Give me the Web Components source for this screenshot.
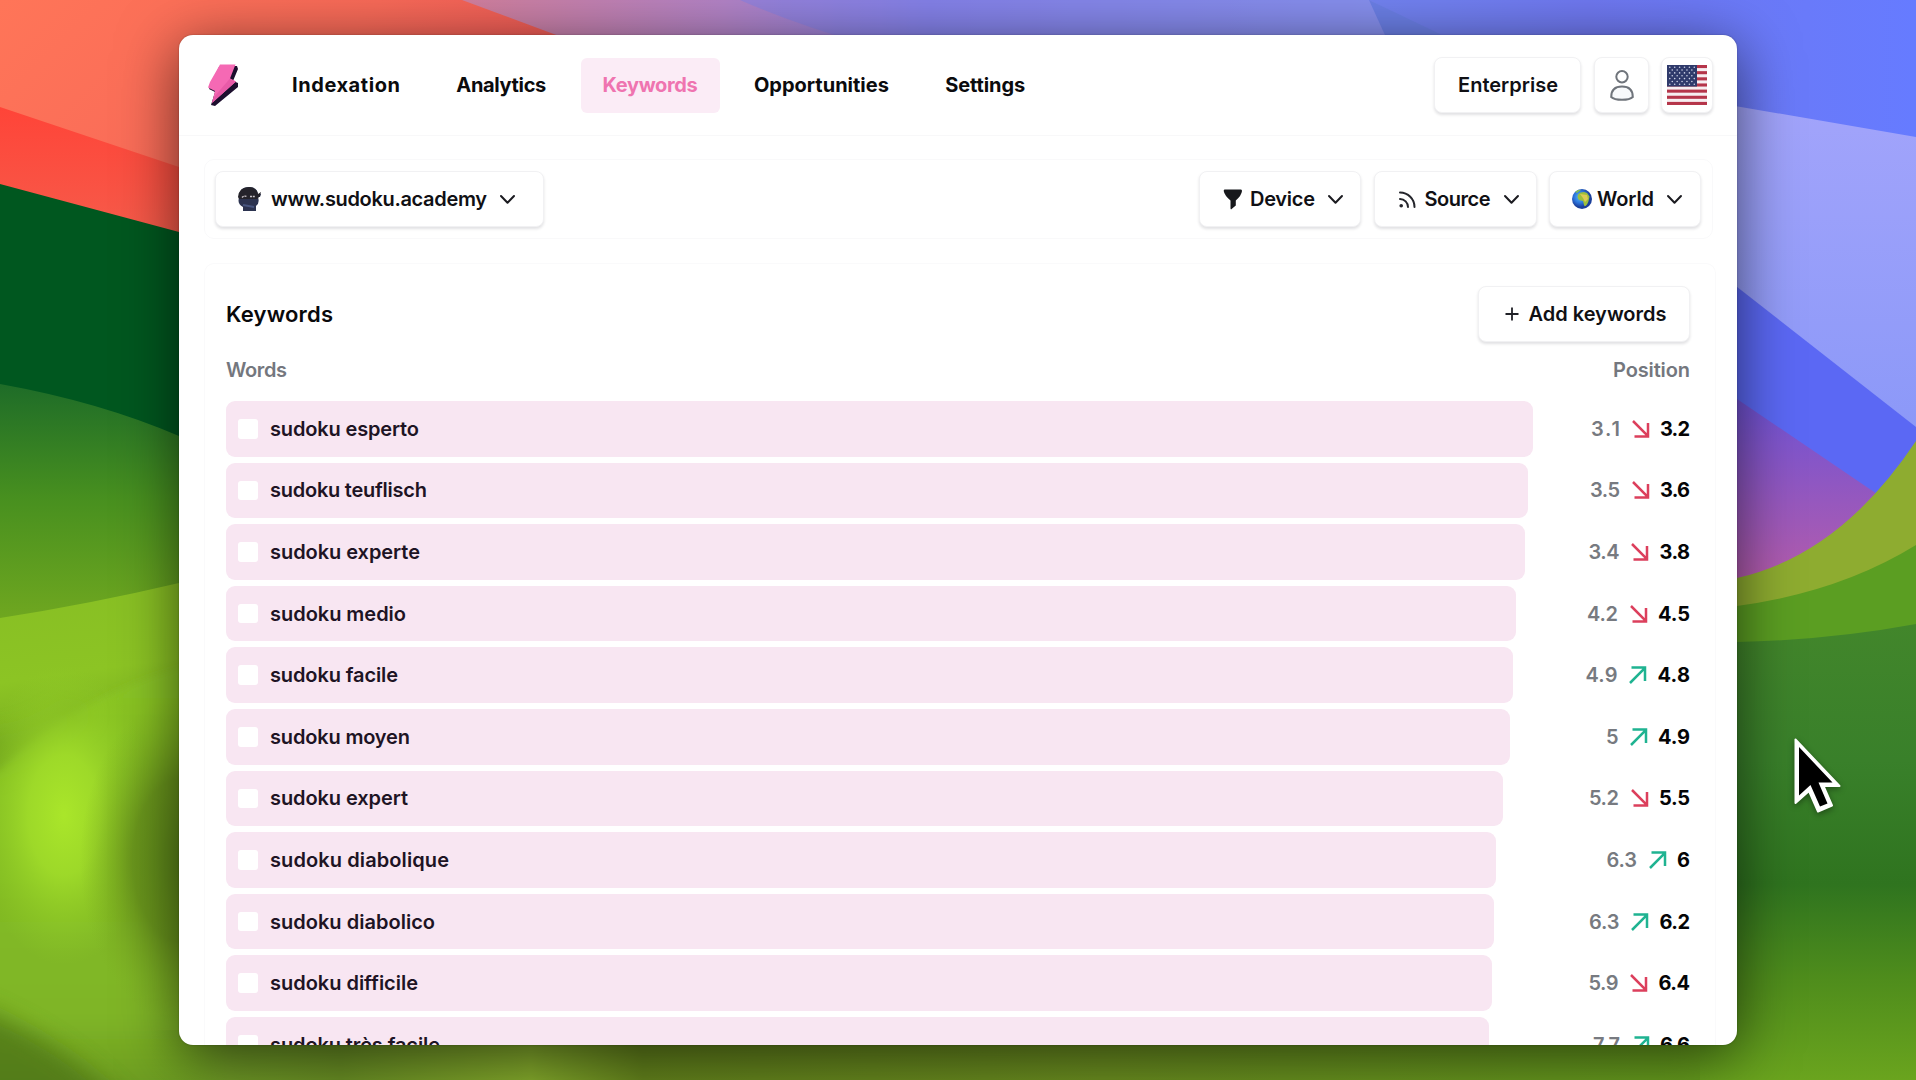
<!DOCTYPE html>
<html lang="en">
<head>
<meta charset="utf-8">
<title>Keywords</title>
<style>
html,body{margin:0;height:100%;overflow:hidden}
body{font-family:Inter,"Open Sans",sans-serif;font-weight:600;font-size:20px;color:#101014}
</style>
</head>
<body>
<keywords-app></keywords-app>
<script>
const def = (name, html, setup) => {
  const tpl = document.createElement('template');
  tpl.innerHTML = html;
  customElements.define(name, class extends HTMLElement {
    connectedCallback() {
      if (this.shadowRoot) return;
      this.attachShadow({mode: 'open'}).append(tpl.content.cloneNode(true));
      if (setup) setup(this, this.shadowRoot);
    }
  });
};

/* Text tracked out to a given advance width */
def('track-text', `<style>
:host{display:inline-block;white-space:nowrap;line-height:28px;flex:none}
span{display:inline-block}
</style><span><slot></slot></span>`, (el, root) => {
  const s = root.querySelector('span');
  const w = +el.getAttribute('w');
  const n = el.textContent.length;
  el.style.width = w + 'px';
  if (n > 1) s.style.letterSpacing = ((w - s.getBoundingClientRect().width) / (n - 1)) + 'px';
});

def('desk-wallpaper', `<style>:host{display:block;width:1916px;height:1080px}svg{display:block}</style>
<svg width="1916" height="1080" viewBox="0 0 1916 1080">
<defs>
<linearGradient id="or" x1="0" y1="0" x2="1" y2=".3"><stop offset="0" stop-color="#ff7558"/><stop offset=".35" stop-color="#f86a58"/><stop offset=".7" stop-color="#e95055"/><stop offset="1" stop-color="#e34c58"/></linearGradient>
<linearGradient id="rd" x1="0" y1="0" x2="0" y2="1"><stop offset="0" stop-color="#ff4438"/><stop offset="1" stop-color="#f4604e"/></linearGradient>
<linearGradient id="top" x1="0" y1="0" x2="1" y2="0"><stop offset="0" stop-color="#d27f9c"/><stop offset=".28" stop-color="#b283c6"/><stop offset=".5" stop-color="#8b82e6"/><stop offset="1" stop-color="#8f9df0"/></linearGradient>
<linearGradient id="bl" x1="0" y1="0" x2="1" y2="0"><stop offset="0" stop-color="#7283f0"/><stop offset=".4" stop-color="#6f78f0"/><stop offset="1" stop-color="#667bff"/></linearGradient>
<linearGradient id="lv" x1="0" y1="0" x2="0" y2="1"><stop offset="0" stop-color="#a2a4fb"/><stop offset="1" stop-color="#8b98f8"/></linearGradient>
<linearGradient id="pu" x1="0" y1="0" x2="0" y2="1"><stop offset="0" stop-color="#6a52d8"/><stop offset="1" stop-color="#b45cac"/></linearGradient>
<linearGradient id="g1" x1="0" y1="0" x2="0" y2="1"><stop offset="0" stop-color="#1e6c28"/><stop offset=".45" stop-color="#48901f"/><stop offset="1" stop-color="#76ab20"/></linearGradient>
<linearGradient id="g2" x1="0" y1="0" x2=".15" y2="1"><stop offset="0" stop-color="#86bd24"/><stop offset=".5" stop-color="#8cc424"/><stop offset="1" stop-color="#6b9c1c"/></linearGradient>
<linearGradient id="g3" x1="0" y1="0" x2="0" y2="1"><stop offset="0" stop-color="#8cc726"/><stop offset=".35" stop-color="#84bd22"/><stop offset=".75" stop-color="#7fb527"/><stop offset="1" stop-color="#5f8a1b"/></linearGradient>
<radialGradient id="glow"><stop offset="0" stop-color="#aae62a"/><stop offset=".4" stop-color="#a2de2a" stop-opacity=".85"/><stop offset="1" stop-color="#90cc28" stop-opacity="0"/></radialGradient>
<radialGradient id="dk"><stop offset="0" stop-color="#5c861a"/><stop offset=".5" stop-color="#658f1b" stop-opacity=".85"/><stop offset="1" stop-color="#7cae20" stop-opacity="0"/></radialGradient>
<linearGradient id="rg" x1="0" y1="0" x2="0" y2="1"><stop offset="0" stop-color="#42862b"/><stop offset=".3" stop-color="#39802a"/><stop offset=".57" stop-color="#2f741f"/><stop offset=".78" stop-color="#4f8d1c"/><stop offset="1" stop-color="#6aa41e"/></linearGradient>
<linearGradient id="bot" x1="0" y1="0" x2="1" y2="0"><stop offset="0" stop-color="#6b9c20" stop-opacity="0"/><stop offset=".05" stop-color="#6f9a26"/><stop offset=".12" stop-color="#6a9024"/><stop offset=".24" stop-color="#86ad2c"/><stop offset=".31" stop-color="#64841c"/><stop offset=".6" stop-color="#6c9020"/><stop offset="1" stop-color="#659e1d"/></linearGradient>
<filter id="b" x="-20%" y="-20%" width="140%" height="140%"><feGaussianBlur stdDeviation="12"/></filter>
<filter id="c" x="-20%" y="-20%" width="140%" height="140%"><feGaussianBlur stdDeviation="3"/></filter>
</defs>
<rect width="1916" height="1080" fill="#5c861c"/>
<rect width="1000" height="300" fill="url(#or)"/>
<path d="M462 0H1400V200H1000Z" fill="url(#top)"/>
<path d="M740 0Q830 40 1000 80H1400V0Z" fill="#7c80ec" opacity=".45"/>
<path d="M1369 0H1916V200H1760Z" fill="url(#bl)"/>
<path d="M1369 0L1440 34L1500 200H1460Z" fill="#6b7fe6"/>
<path d="M0 107L179 167L260 190V260L0 200Z" fill="url(#rd)"/>
<path d="M0 184L179 232L260 250V460L0 400Z" fill="#00571f"/>
<path d="M0 384Q100 402 179 436L260 460V640L0 640Z" fill="url(#g1)"/>
<path d="M0 618Q90 604 179 583L260 560V800H0Z" fill="url(#g2)"/>
<path d="M-60 770H0Q70 700 179 668L300 640V1140H-60Z" fill="url(#g3)" filter="url(#c)"/>
<path d="M-40 735Q20 745 70 705L90 712Q40 760 -40 780Z" fill="#6b9c1c" filter="url(#b)" opacity=".6"/>
<ellipse cx="64" cy="815" rx="90" ry="150" fill="url(#glow)"/>
<ellipse cx="185" cy="860" rx="105" ry="165" fill="url(#dk)"/>
<path d="M-40 1000Q70 1040 150 1130H-40Z" fill="#4b7216" filter="url(#b)" opacity=".75"/>
<rect x="150" y="1030" width="1588" height="50" fill="url(#bot)"/>
<path d="M1700 100L1916 137V440L1700 260Z" fill="url(#lv)"/>
<path d="M1700 258L1916 427V560H1700Z" fill="#5b68f4"/>
<path d="M1700 386L1737 399L1880 496L1800 580H1700Z" fill="url(#pu)"/>
<path d="M1700 590L1737 578Q1840 555 1916 441V640H1700Z" fill="#8eac30"/>
<path d="M1700 610L1737 606Q1840 592 1916 545V680H1700Z" fill="#5b9e22"/>
<path d="M1700 644L1737 642Q1830 640 1916 624V1080H1700Z" fill="url(#rg)"/>
</svg>`);

def('svg-icon', `<style>:host{display:block;flex:none}svg{display:block;overflow:visible}</style>`, (el, root) => {
  const I = {
    bolt: [32, 44, `<path d="M15 3L30 3L31 6L26 18L31 20L31 24L8 43L4 42L8 29L2 26L12 4Z" fill="#1d0f2e"/><path d="M13 1.500L28.500 1.500L23 15.500L29 18.500L5 40L8 28L1 24.500L3 19Z" fill="#f569b4"/><path d="M23 15.500L29 18.500L5 40L7 34Z" fill="#e85ba8"/>`],
    ninja: [24, 24, `<path d="M2 11Q2 0 12 0Q20 0 21 7L24 7L23 10L21 10Q23 16 19 19V24H6V20Q0 17 2 11Z" fill="#2c3350"/><path d="M1 10Q2 0 12 0Q19 0 21 7L24 5L23 9L20 12H2Z" fill="#24232b"/><path d="M5 10.500Q7 8.500 10 9.500M13 9.500L18 9.500" stroke="#c9c3c8" stroke-width="1.400" fill="none" stroke-dasharray="2 .8"/><path d="M6 18L17 20" stroke="#48557f" stroke-width="2"/>`],
    chev: [15, 9, `<path d="M1 1L7.500 7.800L14 1" fill="none" stroke="#1b1b20" stroke-width="2" stroke-linecap="round" stroke-linejoin="round"/>`],
    filter: [20, 21, `<path d="M1.500 0.500H18Q19 .5 19 2Q18.500 6.500 12.800 11.500V16.500L8 20.500L7.500 19.500V11.500Q1.500 6.500 .7 2Q.7 .5 1.500 .5Z" fill="#17181c"/>`],
    rss: [17, 17, `<g fill="none" stroke="#25262c" stroke-width="2" stroke-linecap="round"><path d="M1 1.500A14.500 14.500 0 0 1 15.500 16"/><path d="M1 8A8 8 0 0 1 9 16"/></g><circle cx="2.200" cy="14.800" r="1.800" fill="#25262c"/>`],
    globe: [20, 20, `<defs><radialGradient id="g" cx=".4" cy=".4"><stop offset="0" stop-color="#58c0f4"/><stop offset=".6" stop-color="#2c74dc"/><stop offset="1" stop-color="#1b3f9a"/></radialGradient></defs><circle cx="10" cy="10" r="10" fill="url(#g)"/><path d="M6.500 5Q8 3 12 3L15 4L17.500 7.500L17 10Q16.500 13 15 15.500Q12.500 18.500 12 16L11 12L7 11Q4.500 8 6.500 5Z" fill="#9dbf3c"/><path d="M8 5L15 6L16 10L13 13L11 9Z" fill="#dccb55"/><path d="M3 3Q6 0 9 1L5 4Z" fill="#7fba58"/>`],
    plus: [14, 14, `<path d="M7 0.500V13.500M.5 7H13.500" stroke="#202127" stroke-width="1.800"/>`],
    user: [24, 31, `<g fill="#fff" stroke="#6f747b" stroke-width="2"><circle cx="12" cy="6.800" r="5.700"/><path d="M1.200 27Q1.200 16.500 12 16.500T22.800 27Q20 29.800 12 29.800T1.200 27Z" fill="#f7f9fb"/></g>`],
    down: [18, 18, `<path d="M1 1L16 16.200M16 3V16.500H2.500" fill="none" stroke="#dc3f5c" stroke-width="2.500"/>`],
    up: [18, 18, `<path d="M1 17L16 1.800M2.500 1.500H16V15" fill="none" stroke="#1fb391" stroke-width="2.500"/>`],
    pointer: [50, 80, `<path d="M2.500 3.500V67L16 55L25 75.500L39 69.500L30.500 50H46.500Z" fill="#fff" stroke="#fff" stroke-width="2" stroke-linejoin="round"/><path d="M6 11V59.500L17.500 49L27 70.500L34.500 67.500L25.500 46.500H39.500Z" fill="#000"/>`]
  };
  let k = el.getAttribute('name'), d = I[k];
  if (k === 'flag') {
    let s = '<rect width="40" height="40" rx="2" fill="#f6eef1"/>';
    for (let i = 0; i < 7; i++) s += `<rect y="${i * 6.15}" width="40" height="3.08" fill="#b5354a"/>`;
    s += '<rect width="30" height="21.500" fill="#2f3a6b"/>';
    for (let r = 0; r < 7; r++) for (let c = 0; c < (r % 2 ? 5 : 6); c++)
      s += `<circle cx="${2.8 + c * 4.9 + (r % 2 ? 2.45 : 0)}" cy="${2.2 + r * 2.85}" r=".8" fill="#cdd2e6"/>`;
    d = [40, 40, s];
  }
  root.innerHTML += `<svg width="${d[0]}" height="${d[1]}" viewBox="0 0 ${d[0]} ${d[1]}">${d[2]}</svg>`;
});

def('nav-item', `<style>
:host{display:flex;align-items:center;height:55px;padding:0 22px;border-radius:6px;font-weight:700;color:#0b0b0d}
:host([active]){background:#fbecf6;color:#ef74b0}
</style><slot></slot>`);

def('soft-button', `<style>
:host{display:flex;align-items:center;box-sizing:border-box;height:56px;border-radius:8px;background:#fff;border:1px solid #f1f1f3;box-shadow:0 2px 3px rgba(20,20,40,.13);flex:none}
</style><slot></slot>`, el => {
  el.style.width = el.getAttribute('w') + 'px';
  el.style.paddingLeft = (el.getAttribute('pad') || 0) - 1 + 'px';
});

def('app-header', `<style>
:host{display:flex;align-items:center;height:101px;box-sizing:border-box;border-bottom:1px solid #f8f8f9;padding:0 24px 0 28px}
nav{display:flex;gap:12.300px;margin-left:31px;flex:1}
.r{display:flex;align-items:center;gap:12.500px}
</style>
<svg-icon name="bolt"></svg-icon>
<nav>
<nav-item><track-text w="108">Indexation</track-text></nav-item>
<nav-item><track-text w="90">Analytics</track-text></nav-item>
<nav-item active><track-text w="95">Keywords</track-text></nav-item>
<nav-item><track-text w="135">Opportunities</track-text></nav-item>
<nav-item><track-text w="80">Settings</track-text></nav-item>
</nav>
<div class="r">
<soft-button w="147" pad="24"><track-text w="100">Enterprise</track-text></soft-button>
<soft-button w="55" pad="16"><svg-icon name="user"></svg-icon></soft-button>
<soft-button w="52" pad="6"><svg-icon name="flag"></svg-icon></soft-button>
</div>`);

def('filter-bar', `<style>
:host{display:flex;justify-content:space-between;align-items:center;height:80px;box-sizing:border-box;border:1px solid #f9f9fa;border-radius:10px;padding:0 11px 0 10px;margin:23px 24px 0 25px}
div{display:flex;gap:12.500px}
track-text{margin-left:9px}
.c{margin-left:13px}
</style>
<soft-button w="329" pad="22"><svg-icon name="ninja"></svg-icon><track-text w="216" style="margin-left:10px">www.sudoku.academy</track-text><svg-icon class="c" name="chev"></svg-icon></soft-button>
<div>
<soft-button w="162" pad="24"><svg-icon name="filter"></svg-icon><track-text w="65" style="margin-left:7px">Device</track-text><svg-icon class="c" name="chev"></svg-icon></soft-button>
<soft-button w="163" pad="25"><svg-icon name="rss"></svg-icon><track-text w="66">Source</track-text><svg-icon class="c" name="chev"></svg-icon></soft-button>
<soft-button w="152" pad="23"><svg-icon name="globe"></svg-icon><track-text w="57" style="margin-left:5px">World</track-text><svg-icon class="c" name="chev"></svg-icon></soft-button>
</div>`);

def('keyword-row', `<style>
:host{display:flex;align-items:center;justify-content:space-between;height:55.600px;flex:none}
.bar{display:flex;align-items:center;box-sizing:border-box;height:100%;border-radius:9px;background:#f8e6f2;padding-left:12px;color:#1e1424;font-weight:600}
.box{width:19.500px;height:19.500px;border-radius:3px;background:#fff;margin-right:12.500px}
.pos{display:flex;align-items:center}
.old{color:#777a80}
.new{color:#050506;font-weight:700}
svg-icon{margin:0 10.500px 0 11.500px}
</style>
<div class="bar"><div class="box"></div></div><div class="pos"></div>`, (el, root) => {
  const [word, w, end, a, aw, dir, b, bw] = el.data;
  const bar = root.querySelector('.bar');
  bar.style.width = end - 226 + 'px';
  bar.insertAdjacentHTML('beforeend', `<track-text w="${w}">${word}</track-text>`);
  root.querySelector('.pos').innerHTML =
    `<track-text class="old" w="${aw}">${a}</track-text><svg-icon name="${dir}"></svg-icon><track-text class="new" w="${bw}">${b}</track-text>`;
});

def('keyword-panel', `<style>
:host{display:block;border:1px solid #fafafb;border-bottom:0;border-radius:10px;margin:24px 21px 0 25px;padding:22px 25px 0 21px}
.h{display:flex;align-items:center;justify-content:space-between;height:56px}
.h .t{font-size:22px;color:#09090b}
.h soft-button{margin-right:.500px}
.s{display:flex;align-items:center;justify-content:space-between;height:28px;margin:13.500px 0 17.500px;color:#74777e}
.rows{display:flex;flex-direction:column;gap:6px}
</style>
<div class="h"><track-text class="t" w="107">Keywords</track-text>
<soft-button w="212" pad="27"><svg-icon name="plus"></svg-icon><track-text w="138" style="margin-left:10px">Add keywords</track-text></soft-button></div>
<div class="s"><track-text w="61">Words</track-text><track-text w="77">Position</track-text></div>
<div class="rows"></div>`, (el, root) => {
  const rows = root.querySelector('.rows');
  for (const d of [
    ['sudoku esperto', 149, 1532.7, '3.1', 29, 'down', '3.2', 30],
    ['sudoku teuflisch', 157, 1527.5, '3.5', 30, 'down', '3.6', 30],
    ['sudoku experte', 150, 1525, '3.4', 31, 'down', '3.8', 30.5],
    ['sudoku medio', 136, 1515.8, '4.2', 31, 'down', '4.5', 32],
    ['sudoku facile', 128, 1513, '4.9', 32, 'up', '4.8', 32.5],
    ['sudoku moyen', 140, 1509.5, '5', 12, 'up', '4.9', 32],
    ['sudoku expert', 138, 1502.5, '5.2', 30, 'down', '5.5', 31],
    ['sudoku diabolique', 179, 1495.6, '6.3', 30.5, 'up', '6', 13],
    ['sudoku diabolico', 165, 1493.5, '6.3', 30.5, 'up', '6.2', 30.5],
    ['sudoku difficile', 148, 1491.5, '5.9', 30, 'down', '6.4', 31.5],
    ['sudoku très facile', 170, 1488.5, '7.7', 27, 'up', '6.6', 30]
  ]) {
    const r = document.createElement('keyword-row');
    r.data = d;
    rows.append(r);
  }
});

def('app-window', `<style>
:host{display:block;width:1558px;height:1010px;border-radius:14px;background:#fff;overflow:hidden;box-shadow:0 12px 60px rgba(0,0,0,.6),0 0 2px rgba(0,0,0,.3)}
</style><app-header></app-header><filter-bar></filter-bar><keyword-panel></keyword-panel>`);

def('keywords-app', `<style>
:host{display:block;position:relative;width:1916px;height:1080px;overflow:hidden}
desk-wallpaper,app-window,.ptr{position:absolute}
desk-wallpaper{inset:0}
app-window{left:179px;top:35px}
.ptr{left:1793px;top:736px;filter:drop-shadow(0 2px 3px rgba(0,0,0,.4))}
</style><desk-wallpaper></desk-wallpaper><app-window></app-window><svg-icon class="ptr" name="pointer"></svg-icon>`);
</script>
</body>
</html>
